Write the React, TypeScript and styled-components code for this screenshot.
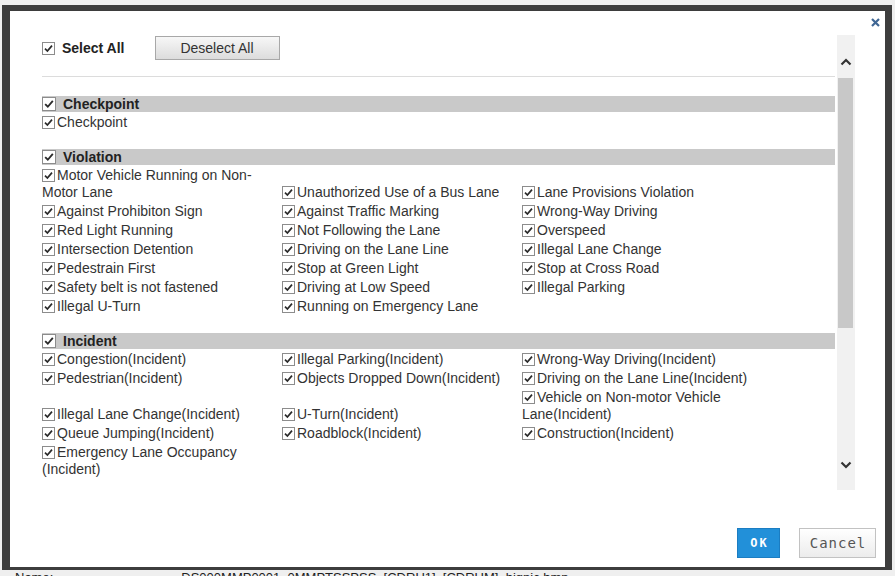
import React from 'react'
import styled, { createGlobalStyle } from 'styled-components'

const GlobalStyle = createGlobalStyle`
  html, body {
    margin: 0;
    padding: 0;
    background: #efefef;
    font-family: "Liberation Sans", Arial, sans-serif;
  }
`

const Page = styled.div`
  width: 895px;
  height: 576px;
  overflow: hidden;
  background: #efefef;
`

const Dialog = styled.div`
  margin: 5px 3px 0 2px;
  height: 565px;
  box-sizing: border-box;
  border-style: solid;
  border-color: #3d3d3d;
  border-width: 6px 7px 3px 8px;
  background: #fff;
  display: flex;
  flex-direction: column;
`

const TitleBar = styled.div`
  height: 24px;
  display: flex;
  justify-content: flex-end;
  align-items: flex-start;
  padding: 7px 5px 0 0;
  box-sizing: border-box;
`

const Close = styled.button`
  border: 0;
  background: none;
  padding: 0;
  width: 9px;
  height: 9px;
  display: flex;
  cursor: pointer;
`

const Body = styled.div`
  height: 455px;
  display: flex;
  padding-left: 32px;
`

const Content = styled.div`
  width: 795px;
  overflow: hidden;
  color: #333;
  font-size: 14px;
`

const SelectRow = styled.div`
  margin-top: 1px;
  height: 24px;
  display: flex;
  align-items: center;
`

const Label = styled.label<{ $bold?: boolean }>`
  display: inline-flex;
  align-items: center;
  font-weight: ${({ $bold }) => ($bold ? 'bold' : 'normal')};
  color: #222;
  font-size: 14px;
`

const Button = styled.button`
  margin-left: 30px;
  width: 125px;
  height: 24px;
  border: 1px solid #a8a8a8;
  background: linear-gradient(#f7f7f7, #dcdcdc);
  font-family: "Liberation Sans", Arial, sans-serif;
  font-size: 14px;
  color: #333;
  padding: 0;
`

const Divider = styled.div`
  margin: 16px 2px 0 0;
  height: 1px;
  background: #dcdcdc;
`

const Group = styled.section`
  margin-top: 17px;
  &:first-of-type {
    margin-top: 19px;
  }
`

const GroupHeader = styled.div`
  height: 16px;
  margin-right: 2px;
  background: #c9c9c9;
  display: flex;
  align-items: center;
  font-weight: bold;
  color: #222;
  line-height: 16px;
`

const Items = styled.div`
  padding-top: 1px;
  line-height: 17px;
`

const Item = styled.label`
  display: inline-block;
  width: 240px;
  padding: 1px 8px 1px 0;
  vertical-align: baseline;
  box-sizing: border-box;
`

const Box = styled.span<{ $gap: number; $size: number }>`
  display: inline-block;
  box-sizing: border-box;
  width: ${({ $size }) => $size}px;
  height: ${({ $size }) => $size}px;
  border: 1px solid #8c8c8c;
  background: #fff;
  margin-right: ${({ $gap }) => $gap}px;
  vertical-align: -2px;
  flex: none;
  svg {
    display: block;
  }
`

const ScrollBar = styled.div`
  width: 18px;
  background: #f1f1f1;
  display: flex;
  flex-direction: column;
`

const Arrow = styled.div<{ $h: number; $pad: number }>`
  height: ${({ $h }) => $h}px;
  display: flex;
  justify-content: center;
  padding-top: ${({ $pad }) => $pad}px;
  box-sizing: border-box;
`

const Thumb = styled.div`
  height: 250px;
  margin: 0 2px 0 1px;
  background: #c8c8c8;
`

const Track = styled.div`
  flex: 1;
`

const Footer = styled.div`
  flex: 1;
  display: flex;
  justify-content: flex-end;
  align-items: flex-end;
  gap: 19px;
  padding: 0 9px 9px 0;
`

const OkButton = styled.button`
  width: 43px;
  height: 30px;
  border: 1px solid #1b7dc2;
  background: #2290d9;
  color: #fff;
  font-family: "DejaVu Sans Mono", monospace;
  font-weight: bold;
  font-size: 12px;
  letter-spacing: 2px;
  padding: 0 0 0 2px;
`

const CancelButton = styled.button`
  width: 77px;
  height: 30px;
  border: 1px solid #c2c2c2;
  background: linear-gradient(#ffffff, #ececec);
  color: #555;
  font-family: "DejaVu Sans Mono", monospace;
  font-size: 14px;
  letter-spacing: 1px;
  padding: 0 0 0 1px;
`

const Behind = styled.div`
  display: flex;
  font-size: 13px;
  color: #222;
  line-height: 16px;
  padding-left: 15px;
  span:last-child {
    margin-left: 128px;
  }
`

const groups = [
  { title: 'Checkpoint', items: ['Checkpoint'] },
  {
    title: 'Violation',
    items: [
      'Motor Vehicle Running on Non-Motor Lane',
      'Unauthorized Use of a Bus Lane',
      'Lane Provisions Violation',
      'Against Prohibiton Sign',
      'Against Traffic Marking',
      'Wrong-Way Driving',
      'Red Light Running',
      'Not Following the Lane',
      'Overspeed',
      'Intersection Detention',
      'Driving on the Lane Line',
      'Illegal Lane Change',
      'Pedestrain First',
      'Stop at Green Light',
      'Stop at Cross Road',
      'Safety belt is not fastened',
      'Driving at Low Speed',
      'Illegal Parking',
      'Illegal U-Turn',
      'Running on Emergency Lane',
    ],
  },
  {
    title: 'Incident',
    items: [
      'Congestion(Incident)',
      'Illegal Parking(Incident)',
      'Wrong-Way Driving(Incident)',
      'Pedestrian(Incident)',
      'Objects Dropped Down(Incident)',
      'Driving on the Lane Line(Incident)',
      'Illegal Lane Change(Incident)',
      'U-Turn(Incident)',
      'Vehicle on Non-motor Vehicle Lane(Incident)',
      'Queue Jumping(Incident)',
      'Roadblock(Incident)',
      'Construction(Incident)',
      'Emergency Lane Occupancy (Incident)',
    ],
  },
]

const Check = ({ gap = 2, size = 13 }: { gap?: number; size?: number }) => (
  <Box $gap={gap} $size={size}>
    <svg width={size - 2} height={size - 2} viewBox="0 0 11 11">
      <path d="M2 5.6 L4.4 8 L9 2.6" fill="none" stroke="#2a2a2a" strokeWidth="1.7" />
    </svg>
  </Box>
)

const Chevron = ({ up }: { up?: boolean }) => (
  <svg width="12" height="8" viewBox="0 0 12 8">
    <path
      d={up ? 'M1.5 6.5 L6 2 L10.5 6.5' : 'M1.5 1.5 L6 6 L10.5 1.5'}
      fill="none"
      stroke="#333"
      strokeWidth="2.2"
    />
  </svg>
)

export default function App() {
  return (
    <Page>
      <GlobalStyle />
      <Dialog>
        <TitleBar>
          <Close aria-label="close">
            <svg width="9" height="9" viewBox="0 0 9 9">
              <path d="M1 1 L8 8 M8 1 L1 8" stroke="#3f6694" strokeWidth="2.2" />
            </svg>
          </Close>
        </TitleBar>
        <Body>
          <Content>
            <SelectRow>
              <Label $bold>
                <Check gap={7} />
                Select All
              </Label>
              <Button>Deselect All</Button>
            </SelectRow>
            <Divider />
            {groups.map((g) => (
              <Group key={g.title}>
                <GroupHeader>
                  <Check gap={7} size={14} />
                  {g.title}
                </GroupHeader>
                <Items>
                  {g.items.map((it) => (
                    <Item key={it}>
                      <Check />
                      {it}
                    </Item>
                  ))}
                </Items>
              </Group>
            ))}
          </Content>
          <ScrollBar>
            <Arrow $h={43} $pad={23}>
              <Chevron up />
            </Arrow>
            <Thumb />
            <Track />
            <Arrow $h={43} $pad={14}>
              <Chevron />
            </Arrow>
          </ScrollBar>
        </Body>
        <Footer>
          <OkButton>OK</OkButton>
          <CancelButton>Cancel</CancelButton>
        </Footer>
      </Dialog>
      <Behind>
        <span>Name:</span>
        <span>DS000MMP0001_0MMPTSSPSS_[CDRU1]_[CDRUM]_bigpic.bmp</span>
      </Behind>
    </Page>
  )
}
